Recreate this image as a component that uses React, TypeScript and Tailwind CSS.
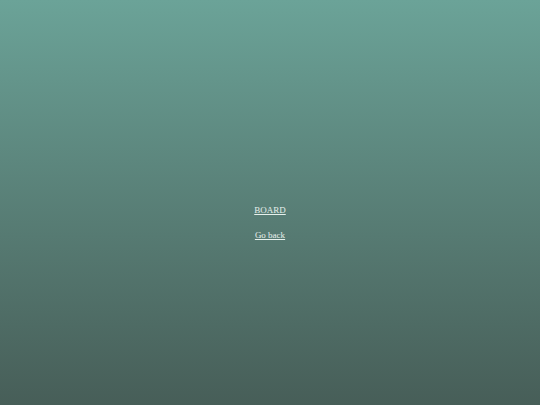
export default function App() {
  return (
    <div className="h-[405px] w-full bg-gradient-to-b from-[#6ba398] to-[#475e58] flex flex-col items-center justify-center gap-[14px] pt-[40px] font-['Liberation_Serif',serif] text-[9px] text-[#e6f0ec]">
      <a href="#" className="underline leading-[11px]">BOARD</a>
      <a href="#" className="underline leading-[11px]">Go back</a>
    </div>
  )
}
